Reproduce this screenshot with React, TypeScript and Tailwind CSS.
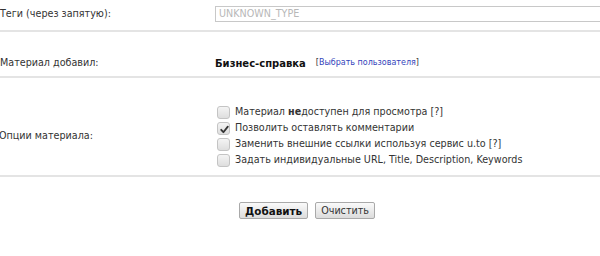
import React from 'react';

const font = { fontFamily: '"DejaVu Sans", Verdana, sans-serif' };

function Box({ checked }: { checked?: boolean }) {
  return (
    <span className="relative inline-block w-[13px] h-[13px] rounded-[3px] border border-[#c4c4c4] bg-gradient-to-b from-[#f4f4f4] to-[#dedede] shrink-0">
      {checked && (
        <svg viewBox="0 0 13 13" className="absolute inset-0 w-[13px] h-[13px]">
          <path d="M3.2 6.8 L5.4 9.2 L9.8 3.6" fill="none" stroke="#333" strokeWidth="1.8" strokeLinecap="round" strokeLinejoin="round" />
        </svg>
      )}
    </span>
  );
}

const options = [
  { text: <>Материал <b>не</b>доступен для просмотра [?]</>, checked: false },
  { text: <>Позволить оставлять комментарии</>, checked: true },
  { text: <>Заменить внешние ссылки используя сервис u.to [?]</>, checked: false },
  { text: <>Задать индивидуальные URL, Title, Description, Keywords</>, checked: false },
];

export default function App() {
  return (
    <div className="w-[600px] h-[256px] bg-white text-[#333] text-[9.6px] overflow-hidden" style={font}>
      <div className="flex items-center h-[32px] pb-[2px] border-b-2 border-[#e4e4e4]">
        <div className="w-[215px] shrink-0">Теги (через запятую):</div>
        <div className="flex-1 h-[16px] border border-[#c8c8c8] pl-[3px] leading-[14px] text-[#b8b8b8] whitespace-nowrap mr-[-20px]">UNKNOWN_TYPE</div>
      </div>

      <div className="flex items-center h-[46px] pt-[18px] border-b-2 border-[#e4e4e4]">
        <div className="w-[215px] shrink-0">Материал добавил:</div>
        <div className="flex items-center">
          <b className="text-[#111] text-[10px]">Бизнес-справка</b>
          <span className="ml-[10px] text-[8px]">
            [<a className="text-[#3344bb]">Выбрать пользователя</a>]
          </span>
        </div>
      </div>

      <div className="flex items-center h-[99px] pt-[19px] border-b-2 border-[#e4e4e4]">
        <div className="w-[216px] shrink-0 -ml-[1px]">Опции материала:</div>
        <div className="flex flex-col gap-[3px] pl-[2px]">
          {options.map((o, i) => (
            <label key={i} className="flex items-center gap-[5px] h-[13px] whitespace-nowrap">
              <Box checked={o.checked} />
              <span>{o.text}</span>
            </label>
          ))}
        </div>
      </div>

      <div className="flex justify-center gap-[7px] pt-[25px] pl-[14px]">
        <button className="h-[17px] px-[5px] border border-[#a9a9a9] rounded-[2px] bg-gradient-to-b from-[#fafafa] to-[#dcdcdc] font-bold text-[10.4px] text-[#111] leading-[14px]">Добавить</button>
        <button className="h-[17px] px-[5px] border border-[#a9a9a9] rounded-[2px] bg-gradient-to-b from-[#fafafa] to-[#dcdcdc] text-[9.6px] text-[#333] leading-[14px]">Очистить</button>
      </div>
    </div>
  );
}
